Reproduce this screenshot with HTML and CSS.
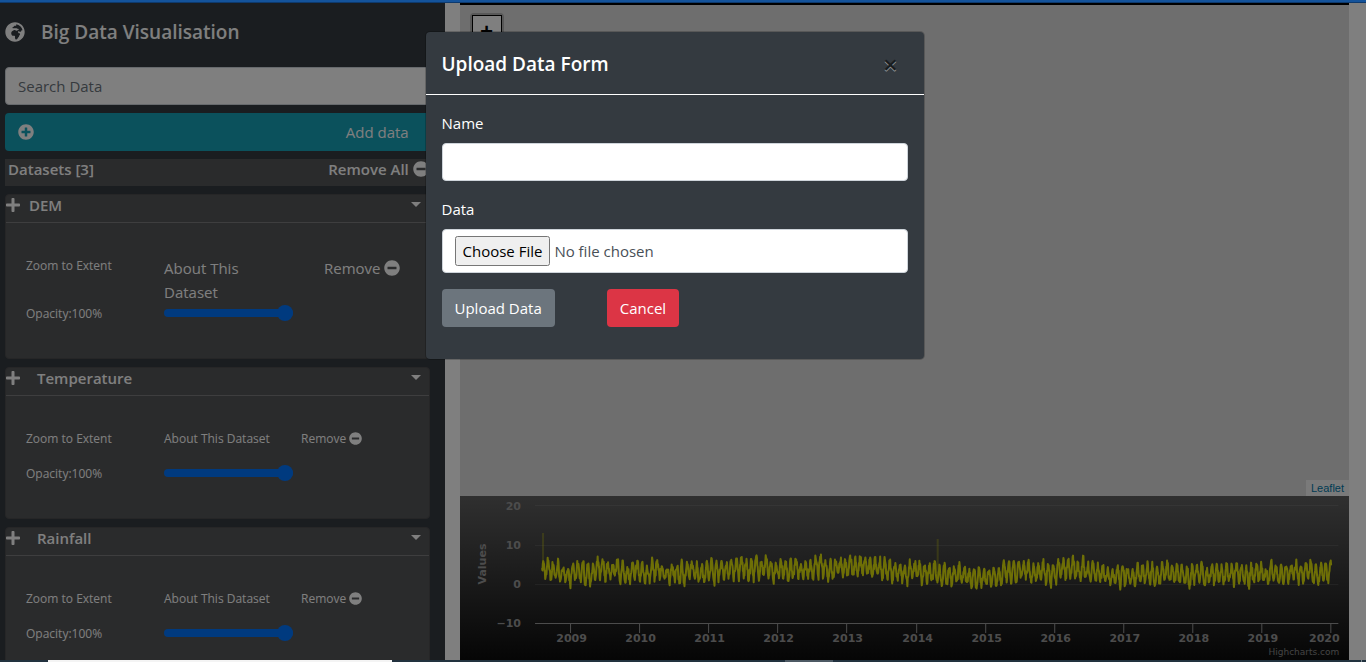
FILE: index.html
```html
<!DOCTYPE html>
<html lang="en">
<head>
<meta charset="utf-8">
<title>Big Data Visualisation</title>
<link rel="stylesheet" href="styles.css">
</head>
<body>
<svg class="sprite" aria-hidden="true">
  <symbol id="plus-circle" viewBox="0 0 512 512"><path d="M256 8C119 8 8 119 8 256s111 248 248 248 248-111 248-248S393 8 256 8zm144 276c0 6.600-5.400 12-12 12h-92v92c0 6.600-5.400 12-12 12h-56c-6.600 0-12-5.400-12-12v-92h-92c-6.600 0-12-5.400-12-12v-56c0-6.600 5.400-12 12-12h92v-92c0-6.600 5.400-12 12-12h56c6.600 0 12 5.400 12 12v92h92c6.600 0 12 5.400 12 12v56z"/></symbol>
  <symbol id="minus-circle" viewBox="0 0 512 512"><path d="M256 8C119 8 8 119 8 256s111 248 248 248 248-111 248-248S393 8 256 8zM124 296c-6.600 0-12-5.400-12-12v-56c0-6.600 5.400-12 12-12h264c6.600 0 12 5.400 12 12v56c0 6.600-5.400 12-12 12H124z"/></symbol>
  <symbol id="plus" viewBox="0 0 448 512"><path d="M416 208H272V64c0-17.670-14.330-32-32-32h-32c-17.670 0-32 14.330-32 32v144H32c-17.670 0-32 14.330-32 32v32c0 17.670 14.330 32 32 32h144v144c0 17.670 14.330 32 32 32h32c17.670 0 32-14.330 32-32V304h144c17.670 0 32-14.330 32-32v-32c0-17.670-14.330-32-32-32z"/></symbol>
  <symbol id="caret" viewBox="0 0 10 5"><path d="M0 0h10L5 5z"/></symbol>
</svg>

<div class="window-edge"></div>

<div class="page">
  <aside class="sidebar">
    <header class="brand">
      <svg class="globe" viewBox="0 0 496 512" aria-hidden="true"><path d="M248 8C111.030 8 0 119.030 0 256s111.030 248 248 248 248-111.030 248-248S384.970 8 248 8zm160 215.500v6.930c0 5.870-3.320 11.240-8.570 13.860l-15.390 7.700a15.485 15.485 0 0 1-15.530-.97l-18.210-12.140a15.520 15.520 0 0 0-13.500-1.810l-2.650.88c-9.700 3.230-13.660 14.790-7.990 23.300l13.240 19.860c2.870 4.310 7.710 6.900 12.890 6.900h8.210c8.560 0 15.500 6.940 15.500 15.500v11.340c0 3.350-1.090 6.620-3.100 9.300l-18.740 24.980c-1.420 1.900-2.390 4.100-2.830 6.430l-4.300 22.830c-.62 3.290-2.290 6.290-4.760 8.560a159.608 159.608 0 0 0-25 29.160l-13.030 19.550a27.756 27.756 0 0 1-23.090 12.360c-10.510 0-20.120-5.940-24.820-15.340a78.902 78.902 0 0 1-8.330-35.290V367.500c0-8.560-6.940-15.500-15.500-15.500h-25.880c-14.490 0-28.380-5.760-38.630-16a54.659 54.659 0 0 1-16-38.630v-14.060c0-17.190 8.100-33.380 21.850-43.700l27.580-20.690a54.663 54.663 0 0 1 32.780-10.930h.89c8.480 0 16.850 1.970 24.430 5.770l14.720 7.360c3.680 1.840 7.930 2.140 11.830.84l47.310-15.770c6.330-2.110 10.600-8.030 10.600-14.700 0-8.560-6.940-15.500-15.500-15.500h-10.090c-4.110 0-8.050-1.630-10.960-4.540l-6.920-6.920a15.493 15.493 0 0 0-10.960-4.540H199.500c-8.560 0-15.500-6.940-15.500-15.500v-4.400c0-7.110 4.840-13.310 11.740-15.040l14.450-3.610c3.740-.94 7-3.230 9.140-6.440l8.080-12.110c2.870-4.310 7.710-6.900 12.890-6.900h24.210c8.560 0 15.500-6.940 15.500-15.500v-21.700C359.230 71.630 422.860 131.020 441.930 208H423.500c-8.560 0-15.500 6.940-15.500 15.500z"/></svg>
      <h1 class="brand-title">Big Data Visualisation</h1>
    </header>

    <input class="control" type="search" placeholder="Search Data" aria-label="Search Data">
    <button class="add-button" type="button">
      <svg class="icon" aria-hidden="true"><use href="#plus-circle"/></svg>
      <span>Add data</span>
    </button>

    <div class="datasets-bar">
      <span>Datasets [3]</span>
      <button class="link-button" type="button">Remove All <svg class="icon" aria-hidden="true"><use href="#minus-circle"/></svg></button>
    </div>

    <section class="card">
      <header class="card-header">
        <svg class="plus" aria-hidden="true"><use href="#plus"/></svg>
        <h2 class="card-title">DEM</h2>
        <button class="caret-button" type="button" aria-label="Toggle DEM"><svg class="caret" aria-hidden="true"><use href="#caret"/></svg></button>
      </header>
      <div class="card-body card-body-large">
        <button class="link-button" type="button">Zoom to Extent</button>
        <button class="link-button large about" type="button">About This Dataset</button>
        <button class="link-button large" type="button">Remove <svg class="icon" aria-hidden="true"><use href="#minus-circle"/></svg></button>
        <label for="opacity-dem">Opacity:100%</label>
        <input class="slider" id="opacity-dem" type="range" value="100">
      </div>
    </section>

    <section class="card">
      <header class="card-header indented">
        <svg class="plus" aria-hidden="true"><use href="#plus"/></svg>
        <h2 class="card-title">Temperature</h2>
        <button class="caret-button" type="button" aria-label="Toggle Temperature"><svg class="caret" aria-hidden="true"><use href="#caret"/></svg></button>
      </header>
      <div class="card-body">
        <button class="link-button" type="button">Zoom to Extent</button>
        <button class="link-button" type="button">About This Dataset</button>
        <button class="link-button" type="button">Remove <svg class="icon-small" aria-hidden="true"><use href="#minus-circle"/></svg></button>
        <label for="opacity-temperature">Opacity:100%</label>
        <input class="slider" id="opacity-temperature" type="range" value="100">
      </div>
    </section>

    <section class="card">
      <header class="card-header indented">
        <svg class="plus" aria-hidden="true"><use href="#plus"/></svg>
        <h2 class="card-title">Rainfall</h2>
        <button class="caret-button" type="button" aria-label="Toggle Rainfall"><svg class="caret" aria-hidden="true"><use href="#caret"/></svg></button>
      </header>
      <div class="card-body">
        <button class="link-button" type="button">Zoom to Extent</button>
        <button class="link-button" type="button">About This Dataset</button>
        <button class="link-button" type="button">Remove <svg class="icon-small" aria-hidden="true"><use href="#minus-circle"/></svg></button>
        <label for="opacity-rainfall">Opacity:100%</label>
        <input class="slider" id="opacity-rainfall" type="range" value="100">
      </div>
    </section>
  </aside>

  <main class="content">
    <div class="map">
      <div class="map-zoom">
        <button class="zoom-button" type="button" aria-label="Zoom in">+</button>
      </div>
      <a class="attribution" href="#leaflet">Leaflet</a>
    </div>
    <svg class="chart" viewBox="0 0 889 164" role="img" aria-label="Values by year">
      <defs>
        <linearGradient id="chart-fill" x1="0" y1="0" x2="0" y2="1">
          <stop offset="0" stop-color="#606060"/>
          <stop offset="1" stop-color="#0c0c0c"/>
        </linearGradient>
      </defs>
      <rect width="889" height="164" fill="url(#chart-fill)"/>
      <path class="grid-line" d="M75 9.500H878M75 49.500H878M75 88.500H878"/>
      <path class="axis-line" d="M75 127.500H878"/>
      <g class="axis-text axis-values">
        <text x="61" y="14">20</text>
        <text x="61" y="53">10</text>
        <text x="61" y="92">0</text>
        <text x="61" y="131">−10</text>
      </g>
      <text class="axis-text axis-title" transform="translate(26 68) rotate(-90)">Values</text>
      <g class="axis-text axis-years" id="years"></g>
      <path class="spike" d="M83 76V37M477.500 80V43"/>
      <polyline class="series" id="series"/>
      <text class="credits" x="879" y="159">Highcharts.com</text>
    </svg>
  </main>

  <div class="backdrop"></div>

  <div class="modal-layer">
    <div class="modal" role="dialog" aria-labelledby="modal-title">
      <header class="modal-header">
        <h2 class="modal-title" id="modal-title">Upload Data Form</h2>
        <button class="close" type="button" aria-label="Close">×</button>
      </header>
      <form class="modal-body">
        <div class="field">
          <label for="name">Name</label>
          <input class="control" id="name" type="text">
        </div>
        <div class="field">
          <label for="data">Data</label>
          <input class="control file" id="data" type="file">
        </div>
        <div class="actions">
          <button class="button secondary" type="button">Upload Data</button>
          <button class="button danger" type="button">Cancel</button>
        </div>
      </form>
    </div>
  </div>
</div>

<div class="taskbar">
  <span class="taskbar-search"></span>
  <span class="taskbar-app"></span>
  <span class="taskbar-end"></span>
</div>
<script src="chart.js"></script>
</body>
</html>
```

FILE: styles.css
```css
* { box-sizing: border-box; }

body {
  margin: 0;
  height: 100vh;
  display: flex;
  flex-direction: column;
  overflow: hidden;
  background: #fff;
  color: #fff;
  font: 15px/24px "Open Sans", sans-serif;
}

button, input { font: inherit; }
h1, h2 { margin: 0; }
.sprite { display: none; }

.window-edge {
  flex: none;
  height: 3px;
  background: #14539b;
  border-bottom: 1px solid #0e3a6d;
}

.page {
  position: relative;
  flex: 1;
  min-height: 0;
  display: grid;
  grid-template-columns: 1fr 2fr;
  grid-template-rows: minmax(0, 1fr);
  column-gap: 15px;
  padding-right: 17px;
}

/* Sidebar */
.sidebar {
  display: flex;
  flex-direction: column;
  gap: 8px;
  padding: 0 15px 0 5px;
  background: #343a40;
  overflow: hidden;
}
.sidebar > * { flex: none; }

.brand {
  display: flex;
  align-items: center;
  gap: 16px;
  height: 56px;
  padding-top: 2px;
}
.globe { width: 20px; height: 20px; fill: #fff; }
.brand-title { font-size: 19px; font-weight: 600; line-height: 24px; }

.control {
  display: block;
  width: 100%;
  height: 38px;
  padding: 6px 12px;
  border: 1px solid #ced4da;
  border-radius: 4px;
  background: #fff;
  color: #495057;
}
.control::placeholder { color: #6c757d; opacity: 1; }

.add-button {
  display: flex;
  align-items: center;
  justify-content: space-between;
  height: 38px;
  padding: 0 21px 0 13px;
  border: 0;
  border-radius: 4px;
  background: #17a2b8;
  color: #fff;
}
.icon { width: 16px; height: 16px; fill: currentColor; vertical-align: -2px; }
.icon-small { width: 13px; height: 13px; fill: currentColor; vertical-align: -2px; }

.datasets-bar {
  display: flex;
  align-items: flex-start;
  justify-content: space-between;
  height: 27px;
  padding: 0 1px 0 3px;
  background: #555658;
  font-weight: 600;
  line-height: 20px;
}
.link-button {
  padding: 0;
  border: 0;
  background: none;
  color: inherit;
  text-align: left;
  white-space: nowrap;
}

.card {
  border: 1px solid #4c4d4f;
  border-radius: 4px;
  background: #555658;
}
.card-header {
  display: flex;
  align-items: flex-start;
  gap: 9px;
  height: 28px;
  padding-right: 8px;
  border-bottom: 1px solid #7c7d7f;
}
.card-header.indented { gap: 17px; }
.plus { width: 14px; height: 16px; margin-top: 2px; fill: #fff; }
.card-title { flex: 1; font-size: 15px; font-weight: 600; line-height: 20px; }
.caret-button { display: flex; padding: 7px 0; border: 0; background: none; color: #fff; }
.caret { width: 10px; height: 5px; fill: currentColor; }

.card-body {
  display: grid;
  grid-template-columns: 138px 137px 1fr;
  align-items: start;
  justify-items: start;
  row-gap: 16px;
  padding: 33px 0 35px 20px;
  font-size: 12px;
  line-height: 19px;
}
.card-body-large { grid-template-columns: 138px 160px 1fr; row-gap: 0; }
.large { font-size: 15px; line-height: 24px; }
.about { padding-right: 32px; white-space: normal; }

.slider {
  appearance: none;
  width: 129px;
  height: 16px;
  margin: 1px 0 0;
  background: none;
}
.slider::-webkit-slider-runnable-track {
  height: 8px;
  border-radius: 4px;
  background: #0075ff;
}
.slider::-webkit-slider-thumb {
  appearance: none;
  width: 16px;
  height: 16px;
  margin-top: -4px;
  border-radius: 50%;
  background: #0075ff;
}

/* Map and chart */
.content { display: flex; flex-direction: column; min-width: 0; }

.map {
  position: relative;
  flex: 1;
  min-height: 0;
  border-top: 2px solid #000;
  background: #ddd;
}
.map-zoom {
  position: absolute;
  top: 8px;
  left: 10px;
  border: 2px solid rgba(0, 0, 0, .2);
  border-radius: 4px;
}
.zoom-button {
  display: block;
  width: 30px;
  height: 38px;
  padding: 0;
  border: 1px solid #000;
  background: #fff;
  color: #000;
  font: bold 22px/36px "Liberation Mono", monospace;
}
.attribution {
  position: absolute;
  right: 0;
  bottom: 0;
  padding: 0 5px;
  background: rgba(255, 255, 255, .7);
  color: #0078a8;
  font: 11px/16px "Liberation Sans", Arial, sans-serif;
  text-decoration: none;
}

.chart { flex: none; display: block; width: 100%; }
.grid-line { stroke: #fff; stroke-opacity: .1; }
.axis-line { stroke: #999; }
.axis-text { fill: #999; font: bold 11px "DejaVu Sans", sans-serif; }
.axis-values { text-anchor: end; }
.axis-title, .axis-years { text-anchor: middle; }
.spike { stroke: #dddf0d; stroke-opacity: .3; stroke-width: 2; }
.series { fill: none; stroke: #dddf0d; stroke-width: 2; stroke-linejoin: round; }
.credits { fill: #888; font: 9px "DejaVu Sans", sans-serif; text-anchor: end; }

/* Upload dialog */
.backdrop { position: absolute; inset: 0; background: rgba(0, 0, 0, .5); }
.modal-layer {
  position: absolute;
  inset: 0;
  display: flex;
  align-items: flex-start;
  justify-content: center;
  padding: 28px 17px 0 0;
}
.modal {
  width: 100%;
  max-width: 500px;
  border: 1px solid rgba(0, 0, 0, .2);
  border-radius: 5px;
  background: #343a40;
  background-clip: padding-box;
}
.modal-header {
  display: flex;
  justify-content: space-between;
  align-items: center;
  padding: 17px 16px 15px;
  border-bottom: 1px solid #fff;
}
.modal-title { font-size: 19px; font-weight: 600; line-height: 30px; }
.close {
  width: 34px;
  height: 28px;
  padding: 0;
  border: 0;
  background: none;
  color: #000;
  font-size: 26px;
  font-weight: 600;
  line-height: 24px;
  text-shadow: 0 1px 0 #fff;
  opacity: .5;
}
.modal-body { display: grid; gap: 16px; padding: 16px 16px 32px; font-weight: 500; }
.field { display: grid; gap: 8px; }
.field .control { font-weight: 400; }
.field .file { height: 44px; }
.file::file-selector-button { height: 30px; font: inherit; }
.actions { display: flex; gap: 52px; }
.button {
  height: 38px;
  padding: 0 13px;
  border: 0;
  border-radius: 4px;
  color: #fff;
  font-weight: 500;
}
.secondary { background: #6c757d; }
.danger { background: #dc3545; }

.taskbar {
  flex: none;
  display: flex;
  height: 2px;
  padding: 0 4px 0 48px;
  background: #22323f;
}
.taskbar-search { width: 344px; background: #f4f4f4; }
.taskbar-app { width: 48px; margin-left: 393px; background: #4d5a64; }
.taskbar-end { width: 1px; margin-left: auto; background: #7c8890; }
```

FILE: chart.js
```js
const svgNs = 'http://www.w3.org/2000/svg';

// Year ticks and labels
const years = document.getElementById('years');
for (let i = 0; i < 12; i++) {
  const x = Math.round(110 + i * 69.1) + 0.5;
  const tick = document.createElementNS(svgNs, 'path');
  tick.setAttribute('class', 'axis-line');
  tick.setAttribute('d', `M${x} 127V137`);
  const label = document.createElementNS(svgNs, 'text');
  label.setAttribute('x', i === 11 ? 864 : x + 1);
  label.setAttribute('y', 146);
  label.textContent = 2009 + i;
  years.append(tick, label);
}

// Local mean of the values along the x axis: [x, mean]
const means = [
  [82, 3.8], [105, 2.6], [145, 3.4], [170, 2.8], [190, 3.3], [215, 2.7],
  [240, 3.6], [300, 4.2], [325, 3.3], [360, 4.4], [400, 4.6], [430, 3.2],
  [470, 3], [515, 1.9], [560, 3], [600, 3.8], [630, 3.1], [660, 2.2],
  [720, 3], [740, 2.3], [790, 2.6], [830, 3], [871, 3.2]
];
const meanAt = x => {
  const i = Math.max(1, means.findIndex(m => m[0] >= x));
  const [x0, m0] = means[i - 1];
  const [x1, m1] = means[i];
  return m0 + (m1 - m0) * (x - x0) / (x1 - x0);
};

let seed = 7;
const random = () => {
  seed = (seed * 16807) % 2147483647;
  return seed / 2147483647;
};

const points = [];
let drift = 0;
for (let x = 82; x <= 871; x += 0.4) {
  drift = drift * 0.85 + (random() - 0.5) * 0.9;
  const wave = Math.sin((x - 82) / 4.95 * 2 * Math.PI) * 2.1;
  const value = meanAt(x) + wave + drift + (random() - 0.5) * 2;
  points.push(`${x.toFixed(1)},${(88.5 - value * 3.93).toFixed(1)}`);
}
document.getElementById('series').setAttribute('points', points.join(' '));
```
